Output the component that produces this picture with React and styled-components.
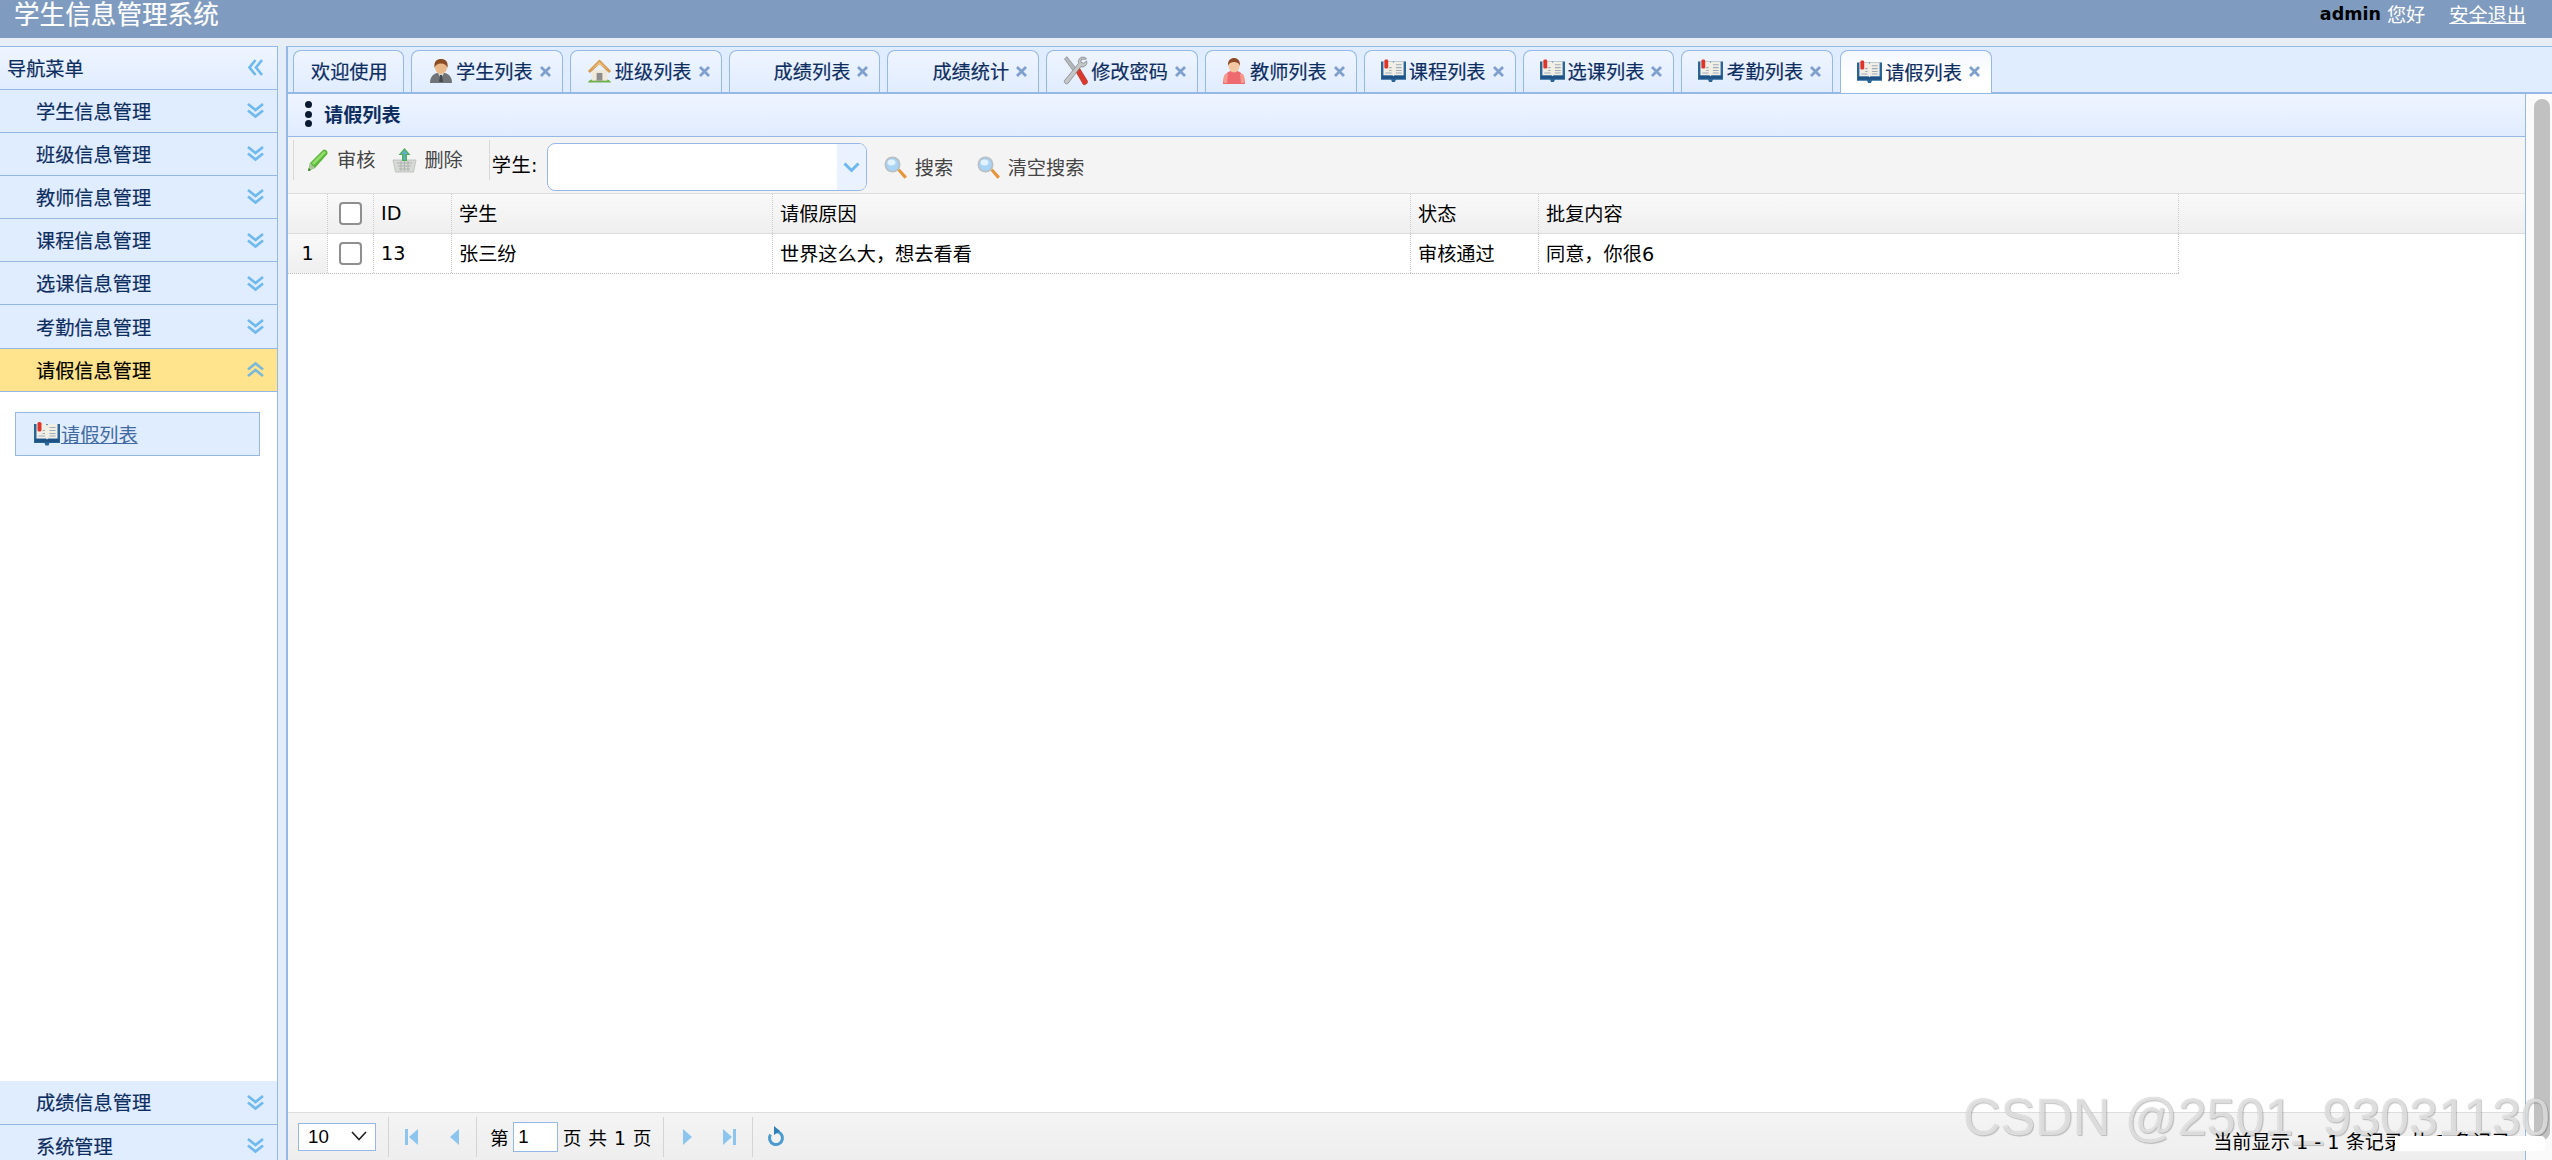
import React from "react";
import styled, { createGlobalStyle } from "styled-components";

const GlobalStyle = createGlobalStyle`
  html, body {
    margin: 0;
    padding: 0;
    height: 100%;
    overflow: hidden;
    background: #fff;
  }
  body {
    font-family: "DejaVu Sans", "Noto Sans CJK SC", sans-serif;
    color: #000;
  }
  * {
    box-sizing: border-box;
  }
`;

const menuTop = ["学生信息管理", "班级信息管理", "教师信息管理", "课程信息管理", "选课信息管理", "考勤信息管理"];
const menuBottom = ["成绩信息管理", "系统管理"];

const tabs = [
  { label: "学生列表", icon: "male" },
  { label: "班级列表", icon: "house" },
  { label: "成绩列表" },
  { label: "成绩统计" },
  { label: "修改密码", icon: "tools" },
  { label: "教师列表", icon: "female" },
  { label: "课程列表", icon: "book" },
  { label: "选课列表", icon: "book" },
  { label: "考勤列表", icon: "book" },
  { label: "请假列表", icon: "book", active: true },
];

function MaleIcon() {
  return (
    <svg width="24" height="26" viewBox="0 0 24 26">
      <path d="M1 25c0-6 3-9 7-10h8c4 1 7 4 7 10z" fill="#6f7478" />
      <path d="M9 15l3 6 3-6z" fill="#d8d8d8" />
      <path d="M11 17h2l1 7h-4z" fill="#44494e" />
      <ellipse cx="12" cy="9" rx="6" ry="7" fill="#eab98a" />
      <path d="M5.500 10C4.500 3 8 1 12 1s7.500 2 6.500 9c-1-3-3-4.500-6.500-4.500S6.500 7 5.500 10z" fill="#8a4d24" />
    </svg>
  );
}

function HouseIcon() {
  return (
    <svg width="26" height="26" viewBox="0 0 26 26">
      <path d="M1 25c1-3 5-4 12-4s11 1 12 4z" fill="#6fb04a" />
      <path d="M5 12h16v11H5z" fill="#efe9dc" />
      <path d="M10 15h6v8h-6z" fill="#8d8d8d" />
      <path d="M13 1L1 13l2 2L13 6l10 9 2-2z" fill="#d69a52" />
      <path d="M13 3L4 12l9-6 9 6z" fill="#eebd7b" />
    </svg>
  );
}

function ToolsIcon() {
  return (
    <svg width="26" height="32" viewBox="0 0 26 32">
      <path d="M1.500 3.500L4 1l11 14-3 3z" fill="#b4b7ba" stroke="#7d7f82" strokeWidth=".6" />
      <path d="M13 16l4-3.500 8.500 14c.8 2-2.500 5-4.500 3.500z" fill="#d8392c" stroke="#a8281e" strokeWidth=".5" />
      <path d="M24.500 3.500c-1.500-2.500-6-3-8 .5-.8 1.500-.6 3-.2 4L1.500 26c-1 1.500 1.500 4.500 3.500 3L18.500 11.500c2 .6 4.500 0 5.700-2 .8-1.300.8-3 .3-4l-3 2.500-2.800-1 .3-3z" fill="#c4c6c8" stroke="#77797c" strokeWidth=".7" />
    </svg>
  );
}

function FemaleIcon() {
  return (
    <svg width="24" height="28" viewBox="0 0 24 28">
      <path d="M1 27c0-7 3-12 8-13h6c5 1 8 6 8 13z" fill="#ee6a6e" />
      <path d="M3 17c-2 3-2 7-1 9h3l1-9zM21 17c2 3 2 7 1 9h-3l-1-9z" fill="#f59a8e" />
      <ellipse cx="12" cy="9" rx="5.500" ry="6.500" fill="#f3c7a2" />
      <path d="M6 9C5.500 3 9 1 12 1s6.500 2 6 8c-1-3-3-4-6-4S7 6 6 9z" fill="#8c4a2a" />
    </svg>
  );
}

function BookIcon() {
  return (
    <svg width="26" height="24" viewBox="0 0 26 24">
      <path d="M0 2h26v19H15.500l-1 2.500h-3l-1-2.500H0z" fill="#2b6498" />
      <path d="M1 17h24v3H1z" fill="#1f5386" />
      <path d="M2.500 2h9.500l1 1.500L14 2h9.500v14.500H14l-1 1-1-1H2.500z" fill="#f1eee6" />
      <path d="M15.500 5.500h6M15.500 8.500h6M15.500 11.500h6M15.500 14h6M8.500 8.500h2.500M8.500 11.500h2.500M4.500 14h6.500" stroke="#9fadb9" strokeWidth="1.100" />
      <rect x="3.500" y="0" width="4" height="9.500" rx="1.500" fill="#e0342b" />
    </svg>
  );
}

function PencilIcon() {
  return (
    <svg width="23" height="24" viewBox="0 0 23 24">
      <path d="M1 23l2-8L16 2c2-2 6 2 4 4.500L8 20z" fill="#5cb83c" />
      <path d="M5 15L17 3l2 1.500L7 17z" fill="#93de6c" />
      <path d="M1 23l2-8 5 5z" fill="#a9c79a" />
      <path d="M1 23l.8-3 2.200 2.200z" fill="#2d7a22" />
    </svg>
  );
}

function BasketIcon() {
  return (
    <svg width="25" height="26" viewBox="0 0 25 26">
      <path d="M1 13h23l-2.500 12h-18z" fill="#d7d9d6" stroke="#b9bcb8" strokeWidth=".8" />
      <path d="M5 16h15M6 19h13M7 22h11M9 14v10M12.500 14v10M16 14v10" stroke="#a8aca8" strokeWidth=".8" />
      <path d="M12.500 1L6.500 8H10v6h5V8h3.500z" fill="#4fae5c" />
      <path d="M12.500 3L9 7h2.500v6h2V7H16z" fill="#5fb0c6" />
    </svg>
  );
}

function SearchIcon() {
  return (
    <svg width="24" height="24" viewBox="0 0 24 24">
      <path d="M14.500 15.500l2-2 7 7.500c.8 1-1.500 3.200-2.500 2.300z" fill="#e8953a" />
      <circle cx="9.500" cy="9.500" r="8" fill="#b9bfc3" />
      <circle cx="9.500" cy="9.500" r="6.300" fill="#a8d4f5" />
      <ellipse cx="8.500" cy="7.500" rx="4" ry="3" fill="#e3f3fe" />
    </svg>
  );
}

function CloseIcon() {
  return (
    <svg width="11" height="11" viewBox="0 0 11 11">
      <path d="M1 1l9 9M10 1l-9 9" stroke="#7f9fcf" strokeWidth="2.800" />
    </svg>
  );
}

function DoubleChevron({ dir = "down", color = "#6fb9ee" }) {
  const turn = { down: 0, up: 180, left: 90 }[dir];
  return (
    <svg width="17" height="17" viewBox="0 0 17 17">
      <g transform={`rotate(${turn} 8.500 8.500)`} fill="none" stroke={color} strokeWidth="2.700">
        <path d="M1 2l7.500 6L16 2" />
        <path d="M1 8.500l7.500 6 7.500-6" />
      </g>
    </svg>
  );
}

function PagerArrow({ kind }) {
  const flip = kind === "first" || kind === "prev";
  const bar = kind === "first" || kind === "last";
  return (
    <svg width={bar ? 13 : 10} height="20" viewBox={bar ? "0 0 13 20" : "0 0 10 20"}>
      <g transform={flip ? `translate(${bar ? 13 : 10} 0) scale(-1 1)` : undefined} fill="#8cc6ee">
        <path d="M0 2l9 8-9 8z" />
        {bar && <rect x="10" y="2" width="3" height="16" />}
      </g>
    </svg>
  );
}

function RefreshIcon() {
  return (
    <svg width="18" height="22" viewBox="0 0 18 22">
      <path d="M9 5.500a6.500 6.500 0 1 1-5.500 3" fill="none" stroke="#4a9bd0" strokeWidth="3" />
      <path d="M7 0l6 5-6 4z" fill="#2f7fb8" />
    </svg>
  );
}

const tabIcons = {
  male: MaleIcon,
  house: HouseIcon,
  tools: ToolsIcon,
  female: FemaleIcon,
  book: BookIcon,
};

export default function App() {
  return (
    <Page>
      <GlobalStyle />
      <TopBar>
        <AppTitle>学生信息管理系统</AppTitle>
        <UserBox>
          <UserName>admin</UserName>
          <Hello>您好</Hello>
          <Logout href="#">安全退出</Logout>
        </UserBox>
      </TopBar>
      <Body>
        <Sidebar>
          <SideHead>
            <span>导航菜单</span>
            <DoubleChevron dir="left" />
          </SideHead>
          {menuTop.map((name) => (
            <MenuHead key={name}>
              <span>{name}</span>
              <DoubleChevron />
            </MenuHead>
          ))}
          <MenuHead $active>
            <span>请假信息管理</span>
            <DoubleChevron dir="up" color="#7ab9da" />
          </MenuHead>
          <MenuContent>
            <MenuLink>
              <BookIcon />
              <a href="#">请假列表</a>
            </MenuLink>
          </MenuContent>
          {menuBottom.map((name) => (
            <MenuHead key={name}>
              <span>{name}</span>
              <DoubleChevron />
            </MenuHead>
          ))}
        </Sidebar>
        <Splitter />
        <Main>
          <TabBar>
            <Tab $plain>欢迎使用</Tab>
            {tabs.map((t) => {
              const Icon = tabIcons[t.icon];
              return (
                <Tab key={t.label} $active={t.active}>
                  <TabIcon>{Icon && <Icon />}</TabIcon>
                  <TabLabel>{t.label}</TabLabel>
                  <CloseIcon />
                </Tab>
              );
            })}
          </TabBar>
          <Content>
            <Panel>
              <PanelTitle>
                <Dots>
                  <i />
                  <i />
                  <i />
                </Dots>
                <span>请假列表</span>
              </PanelTitle>
              <Toolbar>
                <ToolGroup>
                  <ToolButton>
                    <PencilIcon />
                    <span>审核</span>
                  </ToolButton>
                  <ToolButton $wide>
                    <BasketIcon />
                    <span>删除</span>
                  </ToolButton>
                </ToolGroup>
                <FieldLabel>学生:</FieldLabel>
                <Combo>
                  <ComboInput />
                  <ComboArrow>
                    <svg width="17" height="11" viewBox="0 0 17 11">
                      <path d="M1.500 1.500l7 7 7-7" fill="none" stroke="#6cb8f0" strokeWidth="3" />
                    </svg>
                  </ComboArrow>
                </Combo>
                <SearchButton>
                  <SearchIcon />
                  <span>搜索</span>
                </SearchButton>
                <SearchButton $next>
                  <SearchIcon />
                  <span>清空搜索</span>
                </SearchButton>
              </Toolbar>
              <GridHead>
                <Cell />
                <CheckCell>
                  <Check type="checkbox" />
                </CheckCell>
                <Cell>ID</Cell>
                <Cell>学生</Cell>
                <Cell>请假原因</Cell>
                <Cell>状态</Cell>
                <Cell>批复内容</Cell>
              </GridHead>
              <GridRow>
                <RowNumber>1</RowNumber>
                <CheckCell>
                  <Check type="checkbox" />
                </CheckCell>
                <Cell>13</Cell>
                <Cell>张三纷</Cell>
                <Cell>世界这么大，想去看看</Cell>
                <Cell>审核通过</Cell>
                <Cell>同意，你很6</Cell>
              </GridRow>
              <Spacer />
              <Pager>
                <SizeBox>
                  <SizeSelect defaultValue="10">
                    <option>10</option>
                    <option>20</option>
                  </SizeSelect>
                  <SizeChevron>
                    <svg width="16" height="10" viewBox="0 0 16 10">
                      <path d="M1 1l7 7.500L15 1" fill="none" stroke="#222" strokeWidth="1.600" />
                    </svg>
                  </SizeChevron>
                </SizeBox>
                <PagerGroup $gap={31} $pad="0 17px 0 16px">
                  <PagerArrow kind="first" />
                  <PagerArrow kind="prev" />
                </PagerGroup>
                <PagerGroup $gap={4.5} $pad="0 12px 0 13px">
                  <span>第</span>
                  <PageInput defaultValue="1" />
                  <span>页 共 1 页</span>
                </PagerGroup>
                <PagerGroup $gap={30} $pad="0 16px 0 19px">
                  <PagerArrow kind="next" />
                  <PagerArrow kind="last" />
                </PagerGroup>
                <PagerGroup $pad="0 0 0 14px">
                  <RefreshIcon />
                </PagerGroup>
                <PagerInfo>当前显示 1 - 1 条记录 共 1 条记录</PagerInfo>
                <InfoPatch />
              </Pager>
            </Panel>
            <ScrollTrack>
              <ScrollThumb />
            </ScrollTrack>
          </Content>
        </Main>
      </Body>
      <Watermark>CSDN @2501_93031130</Watermark>
    </Page>
  );
}

const Page = styled.div`
  position: relative;
  display: flex;
  flex-direction: column;
  height: 100vh;
  overflow: hidden;
`;

const TopBar = styled.header`
  display: flex;
  justify-content: space-between;
  flex: none;
  height: 38px;
  padding: 0 26px 0 14px;
  background: #7f9bbf;
  color: #fff;
`;

const AppTitle = styled.div`
  font-size: 25.6px;
  line-height: 30px;
  -webkit-text-stroke: 0.2px;
`;

const UserBox = styled.div`
  display: flex;
  align-items: center;
  height: 28px;
  font-size: 19.2px;
`;

const UserName = styled.b`
  color: #000;
  font-size: 17.5px;
`;

const Hello = styled.span`
  margin-left: 6px;
`;

const Logout = styled.a`
  margin-left: 24px;
  color: #fff;
`;

const Body = styled.div`
  display: flex;
  flex: 1;
  min-height: 0;
  padding-top: 8px;
  background: #e7eef6;
`;

const Sidebar = styled.aside`
  display: flex;
  flex-direction: column;
  flex: none;
  width: 278px;
  background: #fff;
  border-top: 1px solid #95b8e7;
  border-right: 1px solid #95b8e7;
  overflow: hidden;
`;

const SideHead = styled.div`
  display: flex;
  align-items: center;
  justify-content: space-between;
  flex: none;
  height: 42.5px;
  padding: 0 13px 0 7px;
  font-size: 19.2px;
  color: #0e2d5f;
  -webkit-text-stroke: 0.2px;
  background: linear-gradient(#eff5ff, #e0ecff);
  border-bottom: 1px solid #95b8e7;
`;

const MenuHead = styled.div`
  display: flex;
  align-items: center;
  justify-content: space-between;
  flex: none;
  height: 43.2px;
  padding: 0 13px 0 36px;
  font-size: 19.2px;
  color: ${(p) => (p.$active ? "#000" : "#0e2d5f")};
  -webkit-text-stroke: 0.2px;
  background: ${(p) => (p.$active ? "#ffe48d" : "#e0ecff")};
  border-bottom: 1px solid #95b8e7;
`;

const MenuContent = styled.div`
  flex: none;
  height: 689.5px;
  padding: 20px 17px 0 15px;
`;

const MenuLink = styled.div`
  display: flex;
  align-items: center;
  height: 44px;
  padding-left: 18px;
  background: #e0ecff;
  border: 1px solid #95b8e7;
  font-size: 19.2px;

  a {
    margin-left: 1px;
    color: #416aa3;
  }
`;

const Splitter = styled.div`
  flex: none;
  width: 8px;
  background: #e3ecf9;
`;

const Main = styled.main`
  display: flex;
  flex-direction: column;
  flex: 1;
  min-width: 0;
`;

const TabBar = styled.div`
  display: flex;
  flex: none;
  gap: 7px;
  height: 48px;
  padding: 3px 0 0 5px;
  background: #e0ecff;
  border-top: 1px solid #95b8e7;
  border-left: 2px solid #95b8e7;
  border-bottom: 2px solid #95b8e7;
`;

const Tab = styled.div`
  display: flex;
  align-items: center;
  flex: none;
  width: ${(p) => (p.$plain ? "111px" : "151.8px")};
  height: ${(p) => (p.$active ? "43px" : "42px")};
  padding-left: ${(p) => (p.$plain ? "17px" : "16px")};
  padding-bottom: 1px;
  font-size: 19.2px;
  color: #0e2d5f;
  -webkit-text-stroke: 0.2px;
  background: ${(p) => (p.$active ? "linear-gradient(#f4f8ff, #fff 70%)" : "linear-gradient(#eff5ff, #e0ecff)")};
  border: 1px solid #95b8e7;
  border-bottom: 0;
  border-radius: 8px 8px 0 0;
`;

const TabIcon = styled.span`
  display: flex;
  align-items: center;
  justify-content: center;
  flex: none;
  width: 25px;
  margin-right: 3px;
`;

const TabLabel = styled.span`
  margin-right: 7px;
`;

const Content = styled.div`
  display: flex;
  flex: 1;
  min-height: 0;
`;

const Panel = styled.section`
  display: flex;
  flex-direction: column;
  flex: 1;
  min-width: 0;
  background: #fff;
  border-left: 2px solid #95b8e7;
  border-right: 1px solid #95b8e7;
`;

const PanelTitle = styled.div`
  display: flex;
  align-items: center;
  flex: none;
  height: 43px;
  padding-left: 17px;
  font-size: 19.2px;
  font-weight: 700;
  color: #0e2d5f;
  background: linear-gradient(#eff5ff, #e0ecff);
  border-bottom: 1px solid #95b8e7;

  span {
    margin-bottom: 2px;
  }
`;

const Dots = styled.span`
  display: flex;
  flex-direction: column;
  gap: 2.500px;
  margin-right: 12px;

  i {
    display: block;
    width: 7px;
    height: 7px;
    border-radius: 50%;
    background: #0b1a33;
  }
`;

const Toolbar = styled.div`
  display: flex;
  align-items: center;
  flex: none;
  height: 56px;
  padding-left: 5px;
  background: #f4f4f4;
  font-size: 19.2px;
`;

const ToolGroup = styled.div`
  display: flex;
  align-items: center;
  align-self: flex-start;
  height: 40px;
  margin-top: 3px;
  padding: 0 26px 0 13px;
  border-left: 1px solid #d8d8d8;
  border-right: 1px solid #d8d8d8;
`;

const ToolButton = styled.span`
  display: flex;
  align-items: center;
  gap: 7px;
  margin-left: ${(p) => (p.$wide ? "17px" : "0")};
  color: #444;

  span {
    margin-bottom: 2px;
  }
`;

const FieldLabel = styled.span`
  width: 55px;
  margin-left: 2px;
  padding-bottom: 2px;
  letter-spacing: .5px;
`;

const Combo = styled.div`
  display: flex;
  width: 320px;
  height: 47.5px;
  margin-top: 4px;
  overflow: hidden;
  background: #fff;
  border: 1px solid #95b8e7;
  border-radius: 8px;
`;

const ComboInput = styled.input`
  flex: 1;
  min-width: 0;
  border: 0;
  outline: 0;
  background: transparent;
`;

const ComboArrow = styled.span`
  display: flex;
  align-items: center;
  justify-content: center;
  flex: none;
  width: 29px;
  background: #eaf2ff;
`;

const SearchButton = styled.span`
  display: flex;
  align-items: center;
  gap: 8px;
  margin-left: ${(p) => (p.$next ? "22.5px" : "16px")};
  margin-top: 3px;
  color: #444;
`;

const gridColumns = "40px 46px 78px 321px 638px 128px 640px";

const GridHead = styled.div`
  display: grid;
  grid-template-columns: ${gridColumns};
  flex: none;
  height: 40.5px;
  font-size: 19.2px;
  background: linear-gradient(#f9f9f9, #efefef);
  border-top: 1px solid #ddd;
  border-bottom: 1px solid #ddd;
`;

const GridRow = styled.div`
  display: grid;
  grid-template-columns: ${gridColumns};
  flex: none;
  width: 1891px;
  height: 40px;
  font-size: 19.2px;
  border-bottom: 1px dotted #bbb;
`;

const Cell = styled.div`
  display: flex;
  align-items: center;
  padding-left: 7px;
  border-right: 1px dotted #ccc;
  white-space: nowrap;
`;

const CheckCell = styled(Cell)`
  justify-content: center;
  padding-left: 0;
`;

const RowNumber = styled(Cell)`
  justify-content: center;
  padding-left: 0;
  background: linear-gradient(#f9f9f9, #efefef);
`;

const Check = styled.input`
  appearance: none;
  width: 23px;
  height: 23px;
  margin: 0;
  background: #fff;
  border: 2px solid #8f8f8f;
  border-radius: 4px;
`;

const Spacer = styled.div`
  flex: 1;
`;

const Pager = styled.div`
  position: relative;
  display: flex;
  align-items: center;
  flex: none;
  height: 48px;
  padding: 0 14px 0 10px;
  font-size: 18.7px;
  background: linear-gradient(#f4f4f4, #eeeeee);
  border-top: 1px solid #ddd;
`;

const SizeBox = styled.div`
  position: relative;
  flex: none;
  width: 78px;
  height: 28px;
  margin-right: 12px;
`;

const SizeSelect = styled.select`
  appearance: none;
  width: 100%;
  height: 100%;
  padding: 0 0 0 9px;
  font: 18.7px "Liberation Sans", sans-serif;
  color: #000;
  background: #fff;
  border: 1px solid #95b8e7;
  border-radius: 0;
  outline: 0;
`;

const SizeChevron = styled.span`
  position: absolute;
  top: 8px;
  right: 9px;
  line-height: 0;
  pointer-events: none;
`;

const PagerGroup = styled.div`
  display: flex;
  align-items: center;
  flex: none;
  gap: ${(p) => p.$gap || 0}px;
  height: 40px;
  padding: ${(p) => p.$pad};
  border-left: 1px solid #d4d4d4;
  word-spacing: 1px;
`;

const PageInput = styled.input`
  width: 45px;
  height: 30px;
  padding: 0 0 0 4px;
  font: 18.7px "Liberation Sans", sans-serif;
  background: #fff;
  border: 1px solid #95b8e7;
  outline: 0;
`;

const PagerInfo = styled.span`
  position: relative;
  z-index: 2;
  margin-left: auto;
  margin-top: 8px;
  font-size: 19.2px;
  white-space: nowrap;
`;

const InfoPatch = styled.div`
  position: absolute;
  z-index: 3;
  top: 23px;
  right: -20px;
  width: 150px;
  height: 15px;
  background: #fff;
  border-radius: 0 4px 4px 0;
`;

const ScrollTrack = styled.div`
  flex: none;
  width: 26.500px;
  padding: 5px 2px 20px 8.500px;
  background: #fafafa;
`;

const ScrollThumb = styled.div`
  height: 100%;
  background: #c1c1c1;
  border-radius: 8px;
`;

const Watermark = styled.div`
  position: absolute;
  right: 2px;
  bottom: 17px;
  font: 52px/52px "Liberation Sans", sans-serif;
  color: rgba(240, 240, 240, 0.8);
  text-shadow: 0 0 1px rgba(0, 0, 0, 0.3), 1px 1px 1px rgba(0, 0, 0, 0.2);
  white-space: nowrap;
  pointer-events: none;
`;
